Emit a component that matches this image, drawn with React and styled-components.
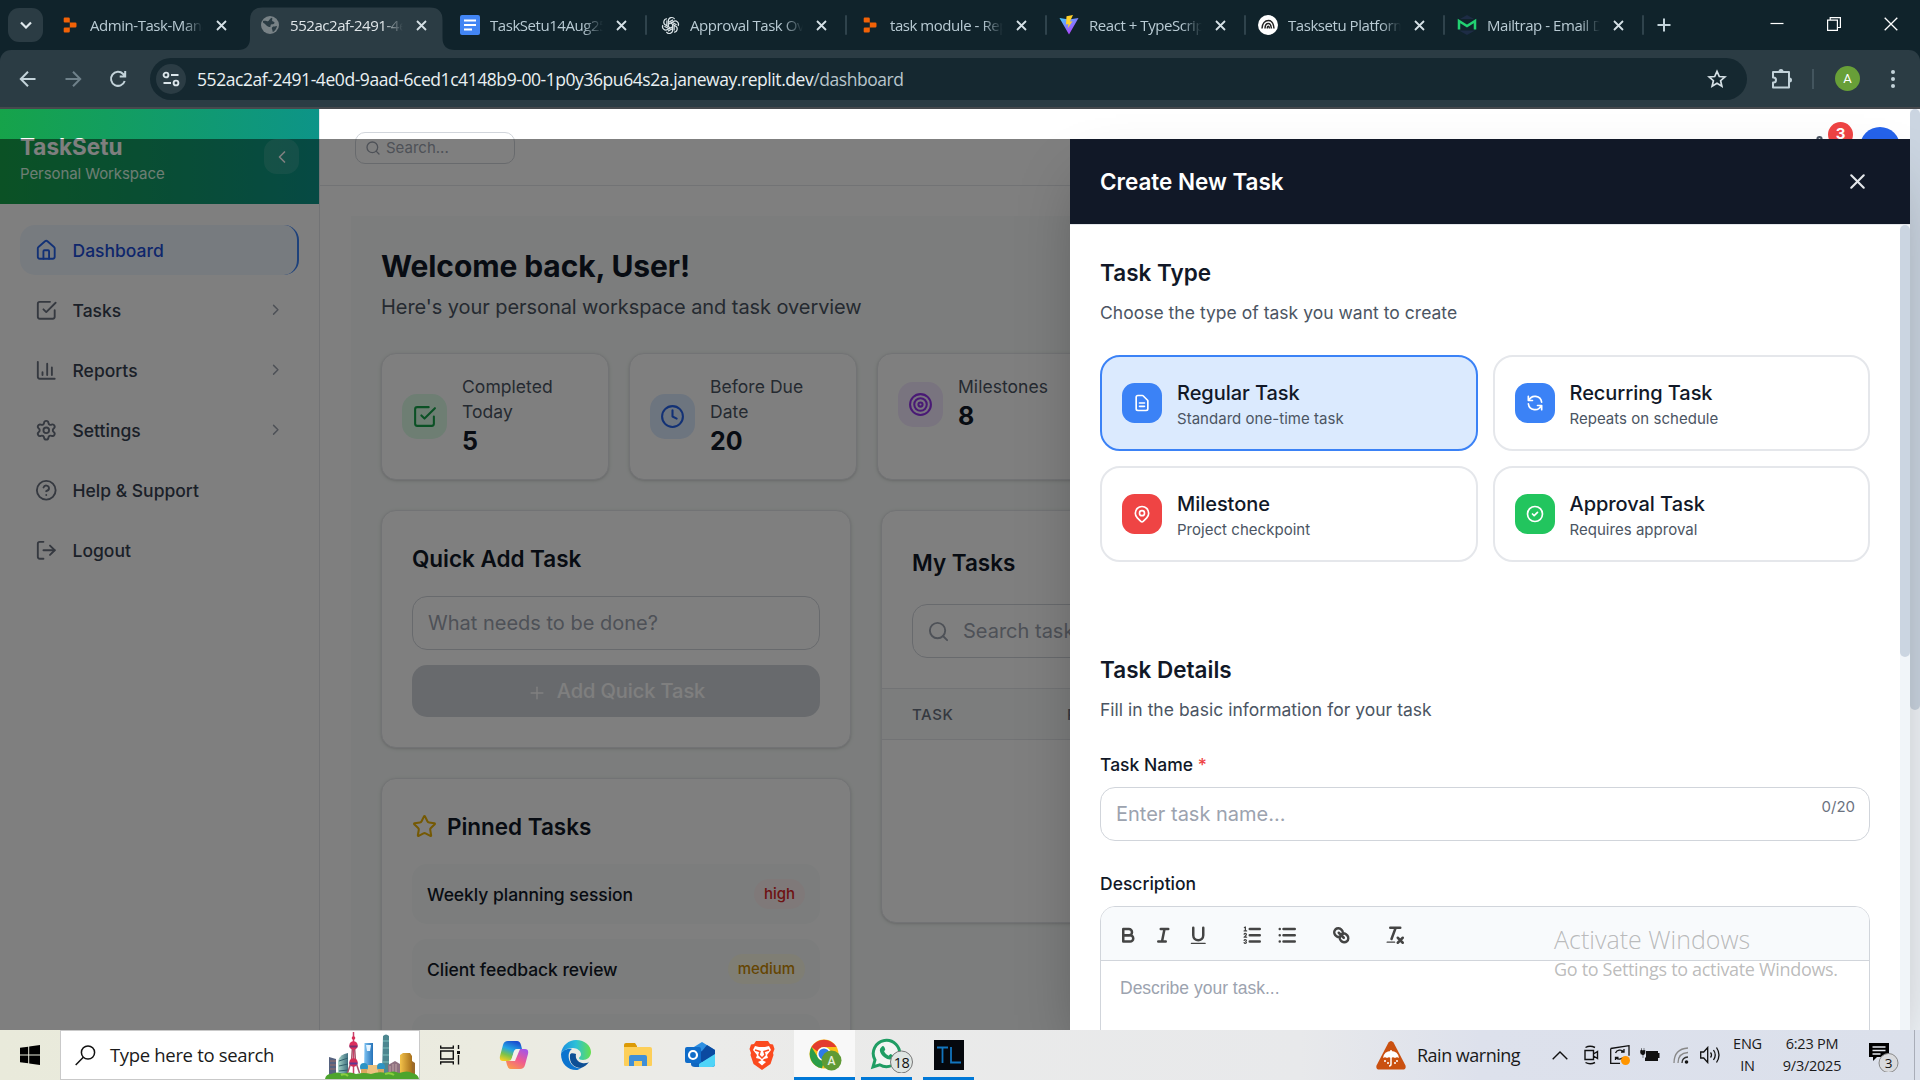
import React from "react";
import styled, { createGlobalStyle } from "styled-components";
import { House, Settings, CircleHelp, LogOut, ChevronRight, ChevronLeft, Clock, Target, Star, Plus, Search, X } from "lucide-react";

const ui = '"Open Sans", "Noto Sans", sans-serif';
const inter = 'Inter, "Liberation Sans", sans-serif';

const Global = createGlobalStyle`
  * { box-sizing: border-box; }
  body { margin: 0; background: #fff; overflow: hidden; }
  svg { display: block; flex: none; }
`;

const Screen = styled.div`
  width: 1920px; height: 1080px; display: flex; flex-direction: column;
  overflow: hidden; position: relative; font-family: ${inter};
`;

/* ---------- browser chrome ---------- */
const TabStrip = styled.div`
  height: 50px; flex: none; background: #10232b; display: flex; align-items: stretch; padding-left: 8px;
`;
const TabSearch = styled.div`
  width: 35px; height: 34px; margin: 8px 7px 0 0; border-radius: 11px; background: #2b3c44; flex: none;
  display: flex; align-items: center; justify-content: center;
`;
const Tab = styled.div`
  width: ${(p) => p.$w}px; flex: none; display: flex; align-items: center; padding-left: 10px; position: relative;
  color: ${(p) => (p.$active ? "#dfe5e8" : "#b9cbd4")};
`;
const ActiveShape = styled.svg`position: absolute; left: -12px; top: 7px;`;
const TabIcon = styled.div`
  width: 20px; height: 20px; display: flex; align-items: center; justify-content: center; margin-right: 10px; position: relative;
`;
const TabTitle = styled.div`
  width: 113px; overflow: hidden; white-space: nowrap; font: 400 15px/22px ${ui}; letter-spacing: -0.45px;
  position: relative; margin-right: 13px; margin-bottom: 1px;
  mask-image: linear-gradient(90deg, #000 82%, transparent 100%);
`;
const TabClose = styled.div`width: 13px; position: relative; color: #d5e0e5;`;
const TabRule = styled.div`
  width: 2px; height: 20px; border-radius: 1px; background: #2f434c; margin-left: 16px;
`;
const NewTab = styled.div`display: flex; align-items: center; margin-left: 12px; color: #c3d3da;`;
const WindowButtons = styled.div`
  margin-left: auto; display: flex; align-items: center; padding: 0 22px 2px 0; gap: 43px;
`;
const Toolbar = styled.div`
  height: 59px; flex: none; background: #10232b;
`;
const ToolbarInner = styled.div`
  height: 59px; background: #2b3c44; border-radius: 11px 11px 0 0; border-bottom: 2px solid #46494d;
  display: flex; align-items: center; padding: 0 20px 0 18px;
`;
const NavButtons = styled.div`display: flex; align-items: center; gap: 25px; width: 132px; color: #c3d3da;`;
const Omnibox = styled.div`
  width: 1597px; height: 42px; border-radius: 21px; background: #152830; display: flex; align-items: center; padding: 0 20px 0 6px;
`;
const SiteInfo = styled.div`
  width: 30px; height: 30px; border-radius: 50%; background: #2b3c44; display: flex; align-items: center; justify-content: center; margin-right: 11px;
`;
const Url = styled.div`
  font: 400 17.5px/24px ${ui}; letter-spacing: -0.44px; color: #eaf0f2; flex: 1; white-space: nowrap;
  span { color: #b9c6cc; }
`;
const Extensions = styled.div`margin-left: 24px;`;
const BarRule = styled.div`width: 2px; height: 20px; background: #43555e; margin: 0 21px 0 19px;`;
const Profile = styled.div`
  width: 25px; height: 25px; border-radius: 50%; background: #689f38; color: #fff; font: 400 13px/25px Roboto, sans-serif; text-align: center;
`;
const MoreDots = styled.div`margin-left: 31px;`;

/* ---------- page ---------- */
const Page = styled.div`
  height: 921px; flex: none; position: relative; display: flex; overflow: hidden; background: #fff;
`;
const Sidebar = styled.div`width: 320px; flex: none; border-right: 1px solid #e5e7eb;`;
const Brand = styled.div`
  height: 95px; background: linear-gradient(90deg, #16a34a, #0d9488); padding: 24px 20px 0 20px;
  display: flex; justify-content: space-between; color: #fff;
`;
const BrandName = styled.div`font-size: 22.5px; font-weight: 700; line-height: 28px;`;
const BrandSub = styled.div`font-size: 15px; line-height: 20px; margin-top: 3px; color: #dcfce7; letter-spacing: -.08px;`;
const Collapse = styled.div`
  width: 35px; height: 35px; border-radius: 12.5px; margin-top: 6px; background: rgba(255,255,255,.12);
  display: flex; align-items: center; justify-content: center;
`;
const Nav = styled.div`padding: 21px 20px; display: flex; flex-direction: column; gap: 10px;`;
const NavItem = styled.div`
  height: 50px; border-radius: 15px; padding: 0 15px; display: flex; align-items: center; gap: 15px;
  font-size: 17.5px; font-weight: 500; color: ${(p) => (p.$active ? "#1d4ed8" : "#374151")};
  background: ${(p) => (p.$active ? "#eff6ff" : "transparent")};
  border-right: ${(p) => (p.$active ? "2px solid #3b82f6" : "0")};
  & > svg:first-child { color: ${(p) => (p.$active ? "#2563eb" : "#6b7280")}; }
  & > svg:last-child:not(:first-child) { margin-left: auto; color: #9ca3af; }
`;
const Main = styled.div`width: 1590px; flex: none;`;
const TopBar = styled.div`
  height: 77px; border-bottom: 1px solid #e5e7eb; display: flex; justify-content: space-between; padding: 18px 10px 0 35px;
`;
const TopSearch = styled.div`
  width: 160px; height: 32px; margin-top: 5px; border: 1px solid #d1d5db; border-radius: 10px; display: flex; align-items: center;
  gap: 5px; padding-left: 9px; font-size: 15px; color: #9ca3af; padding-bottom: 1px;
`;
const TopActions = styled.div`display: flex; gap: 28px; color: #4b5563;`;
const BellWrap = styled.div`position: relative; padding-top: 7px;`;
const BellBadge = styled.div`
  position: absolute; left: 21px; top: -5px; width: 25px; height: 25px; border-radius: 50%; background: #ef4444;
  color: #fff; font-weight: 700; font-size: 15px; line-height: 24px; text-align: center;
`;
const UserDot = styled.div`width: 40px; height: 40px; border-radius: 50%; background: #2563eb;`;
const Workspace = styled.div`margin: 30px 31px 0 31px; padding: 31px 30px; background: #f8fbfa; height: 1000px;`;
const Welcome = styled.h1`margin: 0; font-size: 30px; font-weight: 700; line-height: 38px; color: #111827; letter-spacing: -.1px;`;
const WelcomeSub = styled.p`margin: 7px 0 31px; font-size: 20px; line-height: 30px; color: #4b5563; letter-spacing: -.07px;`;
const Stats = styled.div`display: grid; grid-template-columns: repeat(6, 228px); gap: 20px;`;
const cardLook = `
  background: #fff; border: 1px solid #e5e7eb; border-radius: 15px; box-shadow: 0 1px 4px rgba(0,0,0,.1), 0 1px 2px rgba(0,0,0,.08);
`;
const StatCard = styled.div`${cardLook} height: 127px; padding: 20px;`;
const StatRow = styled.div`display: flex; align-items: center; gap: 15px;`;
const StatIcon = styled.div`
  width: 45px; height: 45px; flex: none; border-radius: 15px; background: ${(p) => p.$bg}; color: ${(p) => p.$fg};
  display: flex; align-items: center; justify-content: center;
`;
const StatLabel = styled.div`font-size: 17.5px; line-height: 25px; color: #4b5563; letter-spacing: .05px;`;
const StatValue = styled.div`font-size: 25px; font-weight: 700; line-height: 35px; color: #111827;`;
const Columns = styled.div`display: grid; grid-template-columns: 470px 1fr; gap: 30px; margin-top: 30px; align-items: start;`;
const Stack = styled.div`display: flex; flex-direction: column; gap: 30px;`;
const Card = styled.div`${cardLook} padding: 30px; height: ${(p) => p.$h}px;`;
const CardTitle = styled.h3`
  margin: 0 0 ${(p) => p.$mb || 20}px; font-size: 22.5px; font-weight: 600; line-height: 35px; height: 35px; color: #111827;
  display: flex; align-items: center; gap: 10px; letter-spacing: -.03px;
`;
const Field = styled.div`
  height: 54px; border: 1px solid #d1d5db; border-radius: 15px; padding: 0 15px; display: flex; align-items: center;
  font-size: 20px; color: #9ca3af; white-space: nowrap;
`;
const SearchField = styled(Field)`gap: 12px; padding-left: 14px; svg { margin-right: 1px; }`;
const AddButton = styled.div`
  margin-top: 15px; height: 52px; border-radius: 15px; background: #d1d5db; color: #fff; font-size: 20px; font-weight: 500;
  display: flex; align-items: center; justify-content: center; gap: 10px; line-height: 48px; padding-bottom: 1px; letter-spacing: -.08px;
  svg { margin-top: 4px; }
`;
const PinList = styled.div`display: flex; flex-direction: column; gap: 15px;`;
const Pin = styled.div`
  height: 60px; border-radius: 15px; background: #f8fbfa; padding: 0 15px; display: flex; align-items: center; justify-content: space-between;
  font-size: 17.5px; font-weight: 500; color: #111827; letter-spacing: -.04px;
`;
const Badge = styled.div`
  height: 30px; border-radius: 15px; padding: 0 10px; font-size: 15px; line-height: 30px; color: ${(p) => p.$fg}; background: ${(p) => p.$bg};
`;
const TasksCard = styled.div`${cardLook} height: 413px; overflow: hidden;`;
const TasksHead = styled.div`padding: 34px 30px 30px;`;
const TableHead = styled.div`
  height: 52px; background: #f8fbfa; border: solid #e5e7eb; border-width: 1px 0; display: grid; grid-template-columns: 155px 1fr;
  padding: 0 30px; align-items: center; font-size: 15px; font-weight: 500; letter-spacing: .6px; color: #6b7280;
`;

/* ---------- drawer ---------- */
const Overlay = styled.div`position: absolute; inset: 30px 10px 0 0; background: rgba(0,0,0,.5);`;
const Drawer = styled.div`
  position: absolute; top: 30px; right: 10px; width: 840px; bottom: 0; background: #fff; display: flex; flex-direction: column;
  box-shadow: 0 31px 62px -15px rgba(0,0,0,.3);
`;
const DrawerHead = styled.div`
  height: 86px; flex: none; background: #111827; border-bottom: 1px solid #e5e7eb; color: #fff; padding: 0 40px 0 30px;
  display: flex; align-items: center; justify-content: space-between; font-size: 22.5px; font-weight: 600; letter-spacing: -.03px;
  svg { color: #e5e7eb; }
`;
const DrawerBody = styled.div`flex: 1; min-height: 0; display: flex; overflow: hidden;`;
const Form = styled.div`width: 830px; padding: 30px 30px 0; overflow: hidden;`;
const Track = styled.div`width: 10px; background: #f1f5f9; flex: none;`;
const Thumb = styled.div`height: ${(p) => p.$h}px; border-radius: 5px; background: #cbd5e1;`;
const SectionTitle = styled.h3`margin: 0; font-size: 22.5px; font-weight: 600; line-height: 35px; color: #111827;`;
const SectionText = styled.p`margin: 10px 0 0; font-size: 17.5px; line-height: 25px; color: #4b5563; letter-spacing: .02px;`;
const TypeGrid = styled.div`display: grid; grid-template-columns: 1fr 1fr; gap: 15px; margin: 30px 0 90px;`;
const TypeCard = styled.div`
  height: 96px; border-radius: 20px; border: 2px solid ${(p) => (p.$on ? "#3b82f6" : "#e5e7eb")}; background: ${(p) => (p.$on ? "#dbeafe" : "#fff")};
  padding: 0 20px; display: flex; align-items: center; gap: 15px;
`;
const TypeIcon = styled.div`
  width: 40px; height: 40px; border-radius: 12.5px; background: ${(p) => p.$bg}; display: flex; align-items: center; justify-content: center; color: #fff;
`;
const TypeName = styled.div`font-size: 20px; font-weight: 500; line-height: 28px; color: #111827; margin-top: 3px; letter-spacing: -.05px;`;
const TypeNote = styled.div`font-size: 15px; line-height: 23px; color: #4b5563; letter-spacing: .03px;`;
const Label = styled.div`
  font-size: 17.5px; font-weight: 500; line-height: 25px; color: #111827; margin: ${(p) => p.$mt}px 0 10px;
  span { color: #ef4444; }
`;
const NameField = styled(Field)`justify-content: space-between; padding: 0 14px 0 15px;`;
const Counter = styled.div`font-size: 15px; color: #6b7280; align-self: flex-start; margin-top: 9px; line-height: 20px;`;
const Editor = styled.div`border: 1px solid #d1d5db; border-radius: 15px; overflow: hidden; height: 200px;`;
const EditorBar = styled.div`
  height: 54px; background: #f8fafc; border-bottom: 1px solid #d1d5db; display: flex; padding: 0 10px; align-items: center; gap: 18.75px;
`;
const ToolGroup = styled.div`display: flex; svg { margin: 3px 6.25px 0; }`;
const EditorHint = styled.div`padding: 16px 19px; font: 400 17.5px/23px "Liberation Sans", Arial, sans-serif; color: #9ca3af;`;
const Watermark = styled.div`
  position: absolute; left: 1554px; top: 921px; font-family: ${ui}; color: rgba(150,150,150,.65); white-space: nowrap; font-weight: 300;
`;
const MarkTitle = styled.div`font-size: 25px; line-height: 36px; letter-spacing: 0;`;
const MarkText = styled.div`font-size: 18px; line-height: 25px; font-weight: 400; letter-spacing: -.32px;`;

/* ---------- taskbar ---------- */
const Taskbar = styled.div`
  height: 50px; flex: none; display: flex; align-items: stretch; font-family: ${ui}; color: #1a1a1a;
  background: linear-gradient(90deg, #e9eadb 0, #ebebe0 480px, #ebebe9 700px, #e8e9eb 1300px, #dde1ec 1480px, #dbe0eb 100%);
`;
const Start = styled.div`width: 60px; display: flex; align-items: center; justify-content: center;`;
const SearchBox = styled.div`
  width: 360px; background: #fff; border: 1px solid #c9c9c9; display: flex; align-items: center; padding-left: 14px; font-size: 18.5px;
  letter-spacing: -.33px; white-space: nowrap;
  svg:last-child { margin-left: auto; }
`;
const SearchHint = styled.span`margin-left: 14px; padding-bottom: 1px;`;
const Apps = styled.div`display: flex; padding-left: 15px;`;
const AppSlot = styled.div`
  width: ${(p) => p.$w}px; margin-left: ${(p) => p.$ml || 0}px; display: flex; align-items: center; justify-content: center;
  background: ${(p) => (p.$front ? "#f8f8f8" : "transparent")};
  border-bottom: 3px solid ${(p) => (p.$open ? "#0078d7" : "transparent")}; padding: 3px 0 0 ${(p) => p.$pl || 0}px;
`;
const Tray = styled.div`margin-left: auto; display: flex; align-items: center; padding-right: 5px;`;
const Weather = styled.div`
  font-size: 18px; letter-spacing: -.5px; margin: 0 30px 0 11px; width: 104px; white-space: nowrap;
`;
const TrayIcon = styled.div`width: ${(p) => p.$w}px; display: flex; justify-content: center;`;
const Stamp = styled.div`
  width: ${(p) => p.$w}px; margin-left: ${(p) => p.$ml || 0}px; text-align: center; font-size: 14.5px; line-height: 22.5px;
  letter-spacing: -0.25px;
`;
const Notice = styled.div`width: 45px; margin-left: 24px; display: flex;`;
const EndRule = styled.div`width: 1px; height: 50px; background: #a9adb8;`;

/* ---------- drawings ---------- */
const Cross = () => (
  <svg width="11" height="11" viewBox="0 0 11 11" stroke="currentColor" strokeWidth="1.8"><path d="M1 1l9 9M10 1l-9 9" /></svg>
);
const Replit = () => (
  <svg width="20" height="20" viewBox="0 0 20 20" fill="#f26207">
    <path d="M4.700 2.500h3.800a1.300 1.300 0 011.300 1.300V7.500H4.700a1 1 0 01-1-1v-3a1 1 0 011-1zM9.800 7.500h5.500a1.200 1.200 0 011.200 1.200v2.600a1.200 1.200 0 01-1.200 1.200H9.800zM4.700 12.500h5.100v3.700a1.300 1.300 0 01-1.300 1.300H4.700a1 1 0 01-1-1v-3a1 1 0 011-1z" />
  </svg>
);
const Globe = () => (
  <svg width="20" height="20" viewBox="0 0 20 20"><circle cx="10" cy="10" r="9" fill="#788286" />
    <path d="M3 6c2.500-1 4 .5 5 .2S9.500 3.500 12 2.700c1 1-.5 2.300.3 3.300s2.500.5 2.200 2-2.500 1-3.500 1.500.3 2-1 2.500-3-1-4.500-2.500S2.500 8 3 6zM12.500 12c1-.8 3-.3 4.500-1-.3 2.500-2 5-4 6-.8-.5-.3-1.700-.8-2.500s-.5-1.900.3-2.500z" fill="#2b3c44" /></svg>
);
const Docs = () => (
  <svg width="20" height="20" viewBox="0 0 20 20"><rect width="20" height="20" rx="2" fill="#4285f4" />
    <path d="M4 5.500h12M4 10h12M4 14.500h8" stroke="#fff" strokeWidth="2" /></svg>
);
const Gpt = () => (
  <svg width="19" height="19" viewBox="0 0 24 24" fill="none" stroke="#dce5e9" strokeWidth="1.5">
    {[0, 60, 120, 180, 240, 300].map((a) => (
      <path key={a} transform={`rotate(${a} 12 12)`} d="M9.300 13.600V6.300a4.300 4.300 0 017.900-2.400M9.300 8.300l5.800-3.400" strokeLinejoin="round" />
    ))}
  </svg>
);
const Vite = () => (
  <svg width="20" height="20" viewBox="0 0 20 20">
    <defs><linearGradient id="vt" x1="0" y1="0" x2="0.700" y2="1"><stop stopColor="#41d1ff" /><stop offset="1" stopColor="#bd34fe" /></linearGradient></defs>
    <path d="M.5 3l9.500 16.500L19.500 3 10 4.500z" fill="url(#vt)" /><path d="M14 0L7.500 1.300 7 9.500l2.500-.5-.8 4.200 4.800-7-2.700.5z" fill="#ffd028" /></svg>
);
const Arcs = () => (
  <svg width="20" height="20" viewBox="0 0 20 20"><circle cx="10" cy="10" r="10" fill="#fff" />
    <path d="M4 13.500c0-5 3-8 6.500-8 3 0 5 2.500 5.500 8M7 13.500c0-3 1.500-5 3.500-5 1.800 0 2.500 2 3 5M9.300 13.500c0-1.500.5-2.300 1.200-2.300.6 0 .8 1 1 2.300" stroke="#222" strokeWidth="1.5" fill="none" /></svg>
);
const Mailtrap = () => (
  <svg width="20" height="20" viewBox="0 0 20 20" fill="none"><path d="M10 0l8 4.500v11L10 20l-8-4.500v-11z" fill="#1d2c45" />
    <path d="M0 4h20v11.500H0z" fill="#10232b" /><path d="M2 14.500V6l8 5 8-5v8.500" stroke="#22d172" strokeWidth="2.500" /></svg>
);
const Check = ({ size }) => (
  <svg width={size} height={size} viewBox="0 0 24 24" fill="none" stroke="currentColor" strokeWidth="2" strokeLinecap="round" strokeLinejoin="round">
    <path d="M9 11l3 3L22 4" /><path d="M21 12v7a2 2 0 01-2 2H5a2 2 0 01-2-2V5a2 2 0 012-2h11" /></svg>
);
const Bars = ({ size }) => (
  <svg width={size} height={size} viewBox="0 0 24 24" fill="none" stroke="currentColor" strokeWidth="2" strokeLinecap="round" strokeLinejoin="round">
    <path d="M3 3v16a2 2 0 002 2h16M18 17V9M13 17V5M8 17v-3" /></svg>
);
const Hero = ({ d, size = 20 }) => (
  <svg width={size} height={size} viewBox="0 0 24 24" fill="none" stroke="currentColor" strokeWidth="2" strokeLinecap="round" strokeLinejoin="round"><path d={d} /></svg>
);
const bellPath = "M15 17h5l-1.405-1.405A2.032 2.032 0 0118 14.158V11a6.002 6.002 0 00-4-5.659V5a2 2 0 10-4 0v.341C7.670 6.165 6 8.388 6 11v3.159c0 .538-.214 1.055-.595 1.436L4 17h5m6 0v1a3 3 0 11-6 0v-1m6 0H9";
const Tool = ({ children }) => (
  <svg width="22.500" height="22.500" viewBox="0 0 18 18" fill="none" stroke="#444" strokeWidth="2" strokeLinecap="round" strokeLinejoin="round">{children}</svg>
);
const City = () => (
  <svg width="94" height="48" viewBox="0 0 94 48">
    <defs>
      <linearGradient id="gold" x1="0" x2="1"><stop stopColor="#f3c24a" /><stop offset="1" stopColor="#a8701c" /></linearGradient>
      <linearGradient id="teal" x1="0" x2="1"><stop stopColor="#a7d6c8" /><stop offset="1" stopColor="#3e6f80" /></linearGradient>
      <linearGradient id="sky" x1="0" x2="1"><stop stopColor="#7fc4f3" /><stop offset="1" stopColor="#2572b8" /></linearGradient>
    </defs>
    <path d="M4 26l7 2v16H4z" fill="#56627f" /><path d="M5 30h6M5 34h6M5 38h6" stroke="#9a6f68" />
    <path d="M13 44V30q2-7 10-8v22z" fill="url(#teal)" /><path d="M14 30l9-3M14 35l9-2M14 40l9-1" stroke="#31606c" />
    <path d="M39.500 12h8.500v32h-9z" fill="url(#sky)" /><path d="M41 14h5l-1 6h-3z" fill="#e6f5ff" />
    <path d="M58 5q3-3 6 0v39h-7z" fill="#4d8790" /><path d="M58 10h6M58 17h6M58 24h6M58 31h6" stroke="#7fc0bd" />
    <path d="M28.500 1v42" stroke="#c94169" strokeWidth="1.500" /><path d="M27.500 16l-1 14-4 12M29.500 16l1 14 4 12" stroke="#a8566d" strokeWidth="1.5" fill="none" />
    <circle cx="28.500" cy="7" r="1.800" fill="#d72f57" /><circle cx="28.500" cy="14.500" r="4.200" fill="#dc2f5d" /><path d="M24.500 14.500h8v2h-8z" fill="#783070" /><circle cx="28.500" cy="31.500" r="4.200" fill="#d32c56" /><path d="M24.500 31.500h8v2h-8z" fill="#5c3a94" />
    <path d="M63 34l7-4 5 3v12H63z" fill="#8f7180" /><path d="M65 35v9M68 33v11M71 33v11" stroke="#c3a7a6" />
    <path d="M75 24l3-2h7l2 3v20H75z" fill="url(#gold)" /><path d="M87 30l3 2v13h-3z" fill="#9c6a2a" />
    <path d="M38 34h18v10H38z" fill="#ecc27f" /><circle cx="39" cy="36" r="4" fill="#2d94c4" /><circle cx="56" cy="36" r="4" fill="#2d94c4" /><path d="M36 38h6v6h-6zM53 38h6v6h-6z" fill="#dba75e" />
    <path d="M0 48q1-5 6-5 6-3 12 0 7-3 13 0 8-2 15 0 8-3 15-1 8-3 13 0 9-3 13 0 6 1 7 6z" fill="#4da42d" /><path d="M16 44q4-2 7 1M60 43q5-2 9 1" stroke="#8bcf3e" strokeWidth="2" fill="none" />
  </svg>
);
const Copilot = () => (
  <svg width="30" height="30" viewBox="0 0 30 30">
    <defs><linearGradient id="ca" x1="0.600" y1="0" x2="0.200" y2="1"><stop stopColor="#1a4fd0" /><stop offset=".4" stopColor="#23a6e4" /><stop offset=".7" stopColor="#7cc24a" /><stop offset="1" stopColor="#f7cf22" /></linearGradient>
      <linearGradient id="cb" x1="0.800" y1="0" x2="0.200" y2="1"><stop stopColor="#a455e8" /><stop offset=".5" stopColor="#ef5b90" /><stop offset="1" stopColor="#fb9a49" /></linearGradient></defs>
    <path d="M9 1h9q3 0 4 4l1 4h-5q-2 0-3 3l-2 6q-1 3-4 3H4q-4 0-3-5L4 5q1-4 5-4z" fill="url(#ca)" />
    <path d="M21 29h-9q-3 0-4-4l-1-4h5q2 0 3-3l2-6q1-3 4-3h5q4 0 3 5l-3 11q-1 4-5 4z" fill="url(#cb)" />
    <path d="M15 11q1-2 3-2h3l-5 12h-4z" fill="#f3f1ea" />
  </svg>
);
const Edge = () => (
  <svg width="30" height="30" viewBox="0 0 30 30">
    <defs><linearGradient id="eg"><stop stopColor="#1b8fe0" /><stop offset=".5" stopColor="#2cc0d8" /><stop offset="1" stopColor="#66e04c" /></linearGradient></defs>
    <path d="M0 14C1 5 8 0 15 0c9 0 15 6 15 12 0 5-4 8-8 8-3 0-4-1-4-2s2-1 2-4-4-6-8-6C6 8 1 11 0 14z" fill="url(#eg)" />
    <path d="M0 14c1-3 6-6 11-5-3 2-4 6-3 10 1 5 6 10 12 9-2 1.500-3 2-5 2C7 30 0 24 0 14z" fill="#0c74cf" />
    <path d="M9 15c-1 8 4 13 11 13 3-1 6-3 8-6 0 0-3 2-7 1s-7-4-6-9c-3-1-6-1-6 1z" fill="#0d4f95" />
  </svg>
);
const Folder = () => (
  <svg width="28" height="24" viewBox="0 0 28 24"><path d="M0 2q0-2 2-2h9l2 3v4H0z" fill="#dc9a06" /><path d="M0 4h26q2 0 2 2v16q0 1-1 1H1q-1 0-1-1z" fill="#fdcf59" />
    <path d="M5 23V14q0-2 2-2h14q2 0 2 2v9h-5v-5h-8v5z" fill="#3f8fd8" /></svg>
);
const Outlook = () => (
  <svg width="30" height="28" viewBox="0 0 30 28"><path d="M17 1L4 9v6h26V9z" fill="#2d8fe2" /><path d="M6 10h24v13q0 3-3 3H10q-4 0-4-3z" fill="#1066c0" /><path d="M30 12L14 23v3h13q3 0 3-3z" fill="#4fd4f8" /><path d="M22 4l8 5v4l-13 8-5-5z" fill="#0b4aa0" />
    <rect y="6" width="16" height="16" rx="2" fill="#0f6cc9" /><circle cx="8" cy="14" r="4" fill="none" stroke="#fff" strokeWidth="2.200" /></svg>
);
const Brave = () => (
  <svg width="26" height="30" viewBox="0 0 26 30"><path d="M7 1h12l2 3 3 .5L25.500 9 24 13l.5 2-3 9-8.500 6-8.500-6-3-9 .5-2L.5 9 2 4.500 5 4z" fill="#fb4a1f" />
    <path d="M6 6l4 1h6l4-1 2 4-4 5 1 3-4 1-2 2-2-2-4-1 1-3-4-5zM9 22l4-2 4 2-4 3.500z" fill="#fff" /><path d="M6 10l5 1.500-1 3.500 3 3 3-3-1-3.500 5-1.500" stroke="#fb4a1f" strokeWidth="1.500" fill="none" /></svg>
);
const Chrome = () => (
  <svg width="34" height="34" viewBox="0 0 34 34"><circle cx="15" cy="16" r="14.500" fill="#fbc116" />
    <path d="M2.500 9A14.500 14.500 0 0127.500 9H15a7 7 0 00-6.500 4.500z" fill="#e33b2e" /><path d="M2.500 9l6.500 10.500A7 7 0 0015 23l-2 7.300A14.500 14.500 0 012.500 9z" fill="#2a9d48" />
    <circle cx="15" cy="16" r="7" fill="#fff" /><circle cx="15" cy="16" r="5.500" fill="#2f7be8" /><circle cx="22.500" cy="22.500" r="10" fill="#5f9a35" />
    <text x="22.500" y="27" textAnchor="middle" fontFamily="Roboto" fontSize="12" fontWeight="500" fill="#e6efdc">A</text></svg>
);
const Whatsapp = () => (
  <svg width="44" height="36" viewBox="0 0 44 36"><path d="M3 30l2-7a13.200 13.200 0 114.700 4.800z" fill="#f2f5f2" stroke="#1f9d63" strokeWidth="3" />
    <path d="M11.500 10q1.500-2 2.800 0l1 2.500-1.200 2q1.500 3 4.500 4.200l1.700-1.700 3 1.300q.7 2.500-2 4-3 1-7-2t-4.500-7q0-2 1.700-3.300z" fill="#1f9d63" />
    <circle cx="31.500" cy="25" r="11" fill="#dfe5e2" stroke="#777" /><text x="31.500" y="30.500" textAnchor="middle" fontFamily="Open Sans" fontSize="14.500" letterSpacing="-.5" fill="#111">18</text></svg>
);
const TL = () => (
  <svg width="30" height="30" viewBox="0 0 30 30"><rect width="30" height="30" fill="#05080d" /><path d="M3 7.500h11M8.500 7.500V23M17 7v15.500h10" stroke="#1275bd" strokeWidth="1.800" fill="none" /></svg>
);
const Rain = () => (
  <svg width="30" height="29" viewBox="0 0 30 29"><path d="M12.500 1.500q2.500-3 5 0l12 23q1 4-3 4h-23q-4 0-3-4z" fill="#ca5010" />
    <path d="M7 17q1-7 8-7t8 7q-2-1.500-4 0-2-1.500-4 0-2-1.500-4 0-2-1.500-4 0z" fill="#fff" /><path d="M15 9v14q0 2-2 2M9 19v2M12 21v2M19 21v2M21 19v2" stroke="#fff" strokeWidth="1.500" fill="none" /></svg>
);

const tabs = [
  { t: "Admin-Task-Manager", i: <Replit />, w: 200 },
  { t: "552ac2af-2491-4e0d", i: <Globe />, w: 200, active: true },
  { t: "TaskSetu14Aug25 - G", i: <Docs />, w: 200, rule: true },
  { t: "Approval Task Overview", i: <Gpt />, w: 200, rule: true },
  { t: "task module - Replit", i: <Replit />, w: 199, rule: true },
  { t: "React + TypeScript", i: <Vite />, w: 199, rule: true },
  { t: "Tasksetu Platform", i: <Arcs />, w: 199, rule: true },
  { t: "Mailtrap - Email De", i: <Mailtrap />, w: 198, rule: true },
];
const nav = [
  ["Dashboard", <House size={22.5} />, false, true],
  ["Tasks", <Check size={22.5} />, true],
  ["Reports", <Bars size={22.5} />, true],
  ["Settings", <Settings size={22.5} />, true],
  ["Help & Support", <CircleHelp size={22.5} />],
  ["Logout", <LogOut size={22.5} />],
];
const stats = [
  [["Completed", "Today"], "5", <Check size={25} />, "#dcfce7", "#16a34a"],
  [["Before Due", "Date"], "20", <Clock size={25} />, "#dbeafe", "#2563eb"],
  [["Milestones"], "8", <Target size={25} />, "#f3e8ff", "#9333ea"],
];
const types = [
  ["Regular Task", "Standard one-time task", "#3b82f6", "M9 12h6m-6 4h6m2 5H7a2 2 0 01-2-2V5a2 2 0 012-2h5.586a1 1 0 01.707.293l5.414 5.414a1 1 0 01.293.707V19a2 2 0 01-2 2z", true],
  ["Recurring Task", "Repeats on schedule", "#3b82f6", "M4 4v5h.582m15.356 2A8.001 8.001 0 004.582 9m0 0H9m11 11v-5h-.581m0 0a8.003 8.003 0 01-15.357-2m15.357 2H15"],
  ["Milestone", "Project checkpoint", "#ef4444", "M17.657 16.657L13.414 20.9a1.998 1.998 0 01-2.827 0l-4.244-4.243a8 8 0 1111.314 0zM15 11a3 3 0 11-6 0 3 3 0 016 0z"],
  ["Approval Task", "Requires approval", "#22c55e", "M9 12l2 2 4-4m6 2a9 9 0 11-18 0 9 9 0 0118 0z"],
];

export default function App() {
  return (
    <Screen>
      <Global />
      <TabStrip>
        <TabSearch><svg width="12" height="8" viewBox="0 0 12 8" fill="none" stroke="#dfe8ec" strokeWidth="2.200"><path d="M1 1.500l5 5 5-5" /></svg></TabSearch>
        {tabs.map((tab) => (
          <Tab key={tab.t} $active={tab.active} $w={tab.w}>
            {tab.active && (
              <ActiveShape width="217" height="43" viewBox="0 0 217 43"><path d="M0 43Q12 43 12 31V13Q12 .5 24.500 .5H192Q204.500 .5 204.500 13V31Q204.500 43 217 43z" fill="#2b3c44" /></ActiveShape>
            )}
            <TabIcon>{tab.i}</TabIcon>
            <TabTitle>{tab.t}</TabTitle>
            <TabClose><Cross /></TabClose>
            {tab.rule && <TabRule />}
          </Tab>
        ))}
        <NewTab><svg width="14" height="14" viewBox="0 0 14 14" stroke="currentColor" strokeWidth="2"><path d="M7 .5v13M.5 7h13" /></svg></NewTab>
        <WindowButtons>
          <svg width="14" height="14" viewBox="0 0 14 14" stroke="#fff" strokeWidth="1.200"><path d="M.5 6.500h13" /></svg>
          <svg width="14" height="14" viewBox="0 0 14 14" stroke="#fff" strokeWidth="1.200" fill="none"><path d="M.6 3.200h9.800v10.200H.6zM3.200 3V.7h10.200v9.800H11" /></svg>
          <svg width="14" height="14" viewBox="0 0 14 14" stroke="#fff" strokeWidth="1.300"><path d="M.7.7l12.600 12.600M13.300.7L.7 13.300" /></svg>
        </WindowButtons>
      </TabStrip>
      <Toolbar>
        <ToolbarInner>
          <NavButtons>
            <svg width="20" height="20" viewBox="0 0 20 20" fill="none" stroke="currentColor" strokeWidth="2"><path d="M17.500 10H3M10 2.800L2.800 10l7.200 7.200" /></svg>
            <svg width="20" height="20" viewBox="0 0 20 20" fill="none" stroke="#6f818a" strokeWidth="2"><path d="M2.500 10H17M10 2.800l7.200 7.200-7.200 7.200" /></svg>
            <svg width="20" height="20" viewBox="0 0 20 20" fill="none" stroke="currentColor" strokeWidth="2"><path d="M16.700 12a7 7 0 11-1.600-7L17 7M17.200 2v5.500h-5.500" /></svg>
          </NavButtons>
          <Omnibox>
            <SiteInfo>
              <svg width="18" height="16" viewBox="0 0 18 16" fill="none" stroke="#dbe5ea" strokeWidth="1.900"><circle cx="4" cy="4" r="2.400" /><path d="M9 4h7.500M1.500 12H9" /><circle cx="14" cy="12" r="2.400" /></svg>
            </SiteInfo>
            <Url>552ac2af-2491-4e0d-9aad-6ced1c4148b9-00-1p0y36pu64s2a.janeway.replit.dev<span>/dashboard</span></Url>
            <svg width="20" height="20" viewBox="0 0 20 20" fill="none" stroke="#d5e0e5" strokeWidth="1.700"><path d="M10 2.300l2.300 5.200 5.600.5-4.300 3.700 1.300 5.500L10 14.300l-4.900 2.900 1.300-5.500L2.100 8l5.600-.5z" /></svg>
          </Omnibox>
          <Extensions><svg width="22" height="22" viewBox="0 0 22 22" fill="none" stroke="#c3d3da" strokeWidth="2" strokeLinejoin="round"><path d="M2 4h16v15.500H2v-5h.5a2.500 2.500 0 000-5H2z" /><path d="M7.500 3.500a2.500 2.500 0 015 0zM18.500 9.500a2.500 2.500 0 010 5z" fill="#c3d3da" stroke="none" /></svg></Extensions>
          <BarRule />
          <Profile>A</Profile>
          <MoreDots><svg width="4" height="20" viewBox="0 0 4 20" fill="#c3d3da"><circle cx="2" cy="3" r="2" /><circle cx="2" cy="10" r="2" /><circle cx="2" cy="17" r="2" /></svg></MoreDots>
        </ToolbarInner>
      </Toolbar>

      <Page>
        <Sidebar>
          <Brand>
            <div><BrandName>TaskSetu</BrandName><BrandSub>Personal Workspace</BrandSub></div>
            <Collapse><ChevronLeft size={20} /></Collapse>
          </Brand>
          <Nav>
            {nav.map(([name, icon, more, active]) => (
              <NavItem key={name} $active={active}>{icon}<span>{name}</span>{more && <ChevronRight size={17.5} />}</NavItem>
            ))}
          </Nav>
        </Sidebar>
        <Main>
          <TopBar>
            <TopSearch><Search size={16} />Search...</TopSearch>
            <TopActions>
              <BellWrap><Hero d={bellPath} size={25} /><BellBadge>3</BellBadge></BellWrap>
              <UserDot />
            </TopActions>
          </TopBar>
          <Workspace>
            <Welcome>Welcome back, User!</Welcome>
            <WelcomeSub>Here's your personal workspace and task overview</WelcomeSub>
            <Stats>
              {stats.map(([label, value, icon, bg, fg]) => (
                <StatCard key={value}>
                  <StatRow>
                    <StatIcon $bg={bg} $fg={fg}>{icon}</StatIcon>
                    <div>{label.map((l) => <StatLabel key={l}>{l}</StatLabel>)}<StatValue>{value}</StatValue></div>
                  </StatRow>
                </StatCard>
              ))}
            </Stats>
            <Columns>
              <Stack>
                <Card $h={238}>
                  <CardTitle>Quick Add Task</CardTitle>
                  <Field>What needs to be done?</Field>
                  <AddButton><Plus size={20} strokeWidth={1.7} />Add Quick Task</AddButton>
                </Card>
                <Card $h={400}>
                  <CardTitle><Star size={25} color="#eab308" />Pinned Tasks</CardTitle>
                  <PinList>
                    <Pin>Weekly planning session<Badge $fg="#dc2626" $bg="#fef2f2">high</Badge></Pin>
                    <Pin>Client feedback review<Badge $fg="#ca8a04" $bg="#fefce8">medium</Badge></Pin>
                    <Pin />
                  </PinList>
                </Card>
              </Stack>
              <TasksCard>
                <TasksHead>
                  <CardTitle $mb={24}>My Tasks</CardTitle>
                  <SearchField><Search size={23} />Search tasks...</SearchField>
                </TasksHead>
                <TableHead><span>TASK</span><span>PRIORITY</span></TableHead>
              </TasksCard>
            </Columns>
          </Workspace>
        </Main>
        <Track><Thumb $h={601} /></Track>

        <Overlay />
        <Drawer>
          <DrawerHead>Create New Task<X size={25} /></DrawerHead>
          <DrawerBody>
            <Form>
              <SectionTitle>Task Type</SectionTitle>
              <SectionText>Choose the type of task you want to create</SectionText>
              <TypeGrid>
                {types.map(([name, note, bg, d, on]) => (
                  <TypeCard key={name} $on={on}>
                    <TypeIcon $bg={bg}><Hero d={d} /></TypeIcon>
                    <div><TypeName>{name}</TypeName><TypeNote>{note}</TypeNote></div>
                  </TypeCard>
                ))}
              </TypeGrid>
              <SectionTitle>Task Details</SectionTitle>
              <SectionText>Fill in the basic information for your task</SectionText>
              <Label $mt={30}>Task Name <span>*</span></Label>
              <NameField>Enter task name...<Counter>0/20</Counter></NameField>
              <Label $mt={30}>Description</Label>
              <Editor>
                <EditorBar>
                  <ToolGroup>
                    <Tool><path d="M5,4H9.500A2.500,2.500,0,0,1,12,6.500v0A2.500,2.500,0,0,1,9.500,9H5V4Z" /><path d="M5,9h5.500A2.500,2.500,0,0,1,13,11.500v0A2.500,2.500,0,0,1,10.500,14H5V9Z" /></Tool>
                    <Tool><path d="M7 4h6M5 14h6M8 14l2-10" /></Tool>
                    <Tool><path d="M5,3V9a4.012,4.012,0,0,0,4,4H9a4.012,4.012,0,0,0,4-4V3" /><rect x="3" y="15" width="12" height="1" rx=".5" fill="#444" stroke="none" /></Tool>
                  </ToolGroup>
                  <ToolGroup>
                    <Tool><path d="M7 4h8M7 9h8M7 14h8" /><path strokeWidth="1" d="M2.500 5.500h2M2.700 2.800l.8-.4v3M4.500,10.500h-2c0-.234,1.850-1.076,1.850-2.234A0.959,0.959,0,0,0,2.500,8.156M2.500,14.846a0.959,0.959,0,0,0,1.850-.109A0.700,0.700,0,0,0,3.750,14a0.688,0.688,0,0,0,.6-0.736,0.959,0.959,0,0,0-1.850-.109" /></Tool>
                    <Tool><path d="M6 4h9M6 9h9M6 14h9M3 4h0M3 9h0M3 14h0" /></Tool>
                  </ToolGroup>
                  <ToolGroup>
                    <Tool><path d="M7 7l4 4M9.100 4.577a3.476 3.476 0 00-4.679-.36 3.476 3.476 0 00-.204 4.683c1.392 1.392 2.500 2.342 4.679.160S10.492 5.969 9.100 4.577ZM8.900 13.423a3.476 3.476 0 004.679.36 3.476 3.476 0 00.204-4.683c-1.392-1.392-2.500-2.342-4.679-.160S7.508 12.031 8.900 13.423Z" /></Tool>
                  </ToolGroup>
                  <ToolGroup>
                    <Tool><path d="M5 3h8M6 12l3.350-9M11 11l4 4M15 11l-4 4" /><rect x="2" y="14" width="7" height="1" rx=".5" fill="#444" stroke="none" /></Tool>
                  </ToolGroup>
                </EditorBar>
                <EditorHint>Describe your task...</EditorHint>
              </Editor>
            </Form>
            <Track><Thumb $h={432} /></Track>
          </DrawerBody>
        </Drawer>
      </Page>
      <Watermark><MarkTitle>Activate Windows</MarkTitle><MarkText>Go to Settings to activate Windows.</MarkText></Watermark>

      <Taskbar>
        <Start><svg width="20" height="20" viewBox="0 0 20 20" fill="#000"><path d="M0 2.800l8.200-1.100v7.800H0zM9.200 1.500L20 0v9.500H9.200zM0 10.500h8.200v7.800L0 17.200zM9.200 10.500H20V20L9.200 18.500z" /></svg></Start>
        <SearchBox>
          <svg width="21" height="21" viewBox="0 0 21 21" fill="none" stroke="#111" strokeWidth="1.500"><circle cx="13" cy="7.500" r="6.600" /><path d="M8.300 12.300L.7 20" /></svg>
          <SearchHint>Type here to search</SearchHint>
          <City />
        </SearchBox>
        <Apps>
          <AppSlot $w={30}><svg width="21" height="20" viewBox="0 0 21 20" fill="none" stroke="#111" strokeWidth="1.400"><path d="M.7.500V3h12.600V.5M.7 6h12.600v8H.7zM.7 19.500V17h12.600v2.500M18.500 0v4M18.500 10v9.500" /><path d="M17 6h3v3h-3z" fill="#111" stroke="none" /></svg></AppSlot>
          <AppSlot $w={61} $ml={18.5}><Copilot /></AppSlot>
          <AppSlot $w={61} $ml={1}><Edge /></AppSlot>
          <AppSlot $w={61} $ml={1}><Folder /></AppSlot>
          <AppSlot $w={61} $ml={1}><Outlook /></AppSlot>
          <AppSlot $w={61} $ml={1}><Brave /></AppSlot>
          <AppSlot $w={61} $ml={1.5} $pl={3} $open $front><Chrome /></AppSlot>
          <AppSlot $w={51} $ml={6} $pl={10} $open><Whatsapp /></AppSlot>
          <AppSlot $w={51} $ml={11} $open><TL /></AppSlot>
        </Apps>
        <Tray>
          <Rain />
          <Weather>Rain warning</Weather>
          <TrayIcon $w={17}><svg width="16" height="9" viewBox="0 0 16 9" fill="none" stroke="#111" strokeWidth="1.400"><path d="M.7 8.300L8 1l7.300 7.300" /></svg></TrayIcon>
          <TrayIcon $w={46}><svg width="15" height="20" viewBox="0 0 15 20" fill="none" stroke="#111" strokeWidth="1.400"><path d="M1 5.500h8.500v9H1zM9.500 9l4-2.500v7l-4-2.500M1.500 2.500Q6 0 11 2.500M1.500 17.500q4.500 2.500 9.500 0" /></svg></TrayIcon>
          <TrayIcon $w={12}><svg width="20" height="20" viewBox="0 0 20 20" fill="none" stroke="#111" strokeWidth="1.300"><path d="M.7 3.500L19 .7v10M.7 3.500v14.800H10M5.500 8a5 5 0 018-1.500M14 4v3h-3M13 12.500a5 5 0 01-7 .5M5.500 15v-2.500h3" /><circle cx="15.500" cy="15.500" r="4.500" fill="#ff9500" stroke="none" /></svg></TrayIcon>
          <TrayIcon $w={47}><svg width="20" height="14" viewBox="0 0 20 14" fill="#111"><path d="M6 3h12v2h1.500v5H18v3H5V9.500h1z" /><path d="M0 2h1V0h1v2h1.500V0h1v2h1v3q-.5 2-2 2.200V10h-1V7.200Q.5 7 0 5z" stroke="#dde1ec" strokeWidth=".5" /></svg></TrayIcon>
          <TrayIcon $w={16}><svg width="16" height="17" viewBox="0 0 16 17" fill="none" stroke="#888" strokeWidth="1.300"><path d="M1 16Q1 2 15 1M5 16q0-10 10-10.500" /><path d="M9 16q0-5.500 6-6" stroke="#333" /><circle cx="13.500" cy="15" r="1.800" fill="#111" stroke="none" /></svg></TrayIcon>
          <TrayIcon $w={42}><svg width="20" height="18" viewBox="0 0 20 18" fill="none" stroke="#111" strokeWidth="1.300"><path d="M.7 6h3l4-4.500v15L3.700 12h-3zM10.500 6.500q2 2.500 0 5M13.500 4q3.500 5 0 10M16.500 1.500q5 7.500 0 15" /></svg></TrayIcon>
          <Stamp $w={33}>ENG<br />IN</Stamp>
          <Stamp $w={66} $ml={15}>6:23 PM<br />9/3/2025</Stamp>
          <Notice><svg width="31" height="34" viewBox="0 0 31 34"><path d="M0 5h20v14H8l-4 4v-4H0z" fill="#000" /><path d="M3.500 9h13M3.500 12.500h13M3.500 16h8" stroke="#e4e7ee" strokeWidth="1.300" /><circle cx="19.500" cy="25" r="9.500" fill="#d9dadd" stroke="#888" /><text x="19.500" y="30" textAnchor="middle" fontFamily="Open Sans" fontSize="13.500" fill="#111">3</text></svg></Notice>
          <EndRule />
        </Tray>
      </Taskbar>
    </Screen>
  );
}
